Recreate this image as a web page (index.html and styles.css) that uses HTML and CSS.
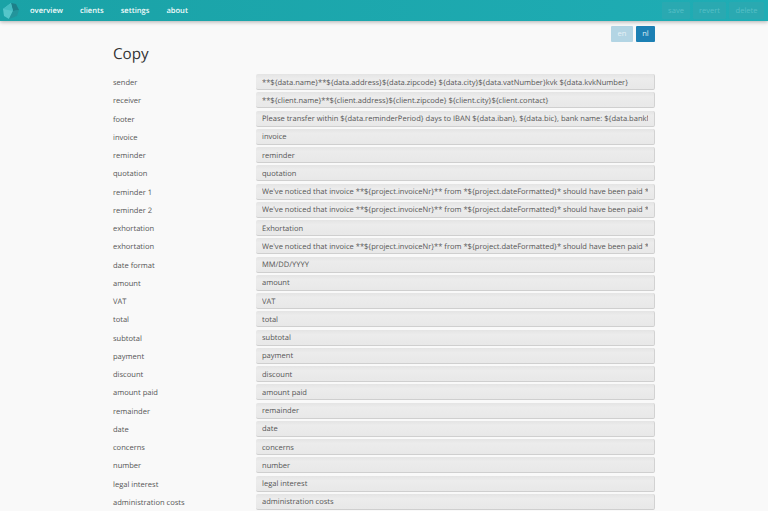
FILE: index.html
```html
<!DOCTYPE html>
<html lang="en">
<head>
<meta charset="utf-8">
<title>Copy</title>
<link rel="stylesheet" href="styles.css">
</head>
<body>
<header class="topbar">
  <svg class="logo" width="18" height="18" viewBox="0 0 18 18"><polygon points="1,7 9,1 11,9 7,17 2,14" fill="#55c6ca"/><polygon points="9,1 14,2 17,8 11,9" fill="#1d7f88"/><polygon points="17,8 15,14 7,17 11,9" fill="#23949b"/><polygon points="1,7 9,1 11,9" fill="#43bcc1"/></svg>
  <nav class="nav"><a>overview</a><a>clients</a><a>settings</a><a>about</a></nav>
  <div class="actions"><button class="save">save</button><button class="revert">revert</button><button class="delete">delete</button></div>
</header>
<main class="page">
  <div class="langs"><button class="lang">en</button><button class="lang on">nl</button></div>
  <h1>Copy</h1>
  <form class="rows">
    <label class="row"><span>sender</span><input value="**${data.name}**${data.address}${data.zipcode} ${data.city}${data.vatNumber}kvk ${data.kvkNumber}"></label>
    <label class="row"><span>receiver</span><input value="**${client.name}**${client.address}${client.zipcode} ${client.city}${client.contact}"></label>
    <label class="row"><span>footer</span><input value="Please transfer within ${data.reminderPeriod} days to IBAN ${data.iban}, ${data.bic}, bank name: ${data.bankName}"></label>
    <label class="row"><span>invoice</span><input value="invoice"></label>
    <label class="row"><span>reminder</span><input value="reminder"></label>
    <label class="row"><span>quotation</span><input value="quotation"></label>
    <label class="row"><span>reminder 1</span><input value="We've noticed that invoice **${project.invoiceNr}** from *${project.dateFormatted}* should have been paid *before*"></label>
    <label class="row"><span>reminder 2</span><input value="We've noticed that invoice **${project.invoiceNr}** from *${project.dateFormatted}* should have been paid *before*"></label>
    <label class="row"><span>exhortation</span><input value="Exhortation"></label>
    <label class="row"><span>exhortation</span><input value="We've noticed that invoice **${project.invoiceNr}** from *${project.dateFormatted}* should have been paid *before*"></label>
    <label class="row"><span>date format</span><input value="MM/DD/YYYY"></label>
    <label class="row"><span>amount</span><input value="amount"></label>
    <label class="row"><span>VAT</span><input value="VAT"></label>
    <label class="row"><span>total</span><input value="total"></label>
    <label class="row"><span>subtotal</span><input value="subtotal"></label>
    <label class="row"><span>payment</span><input value="payment"></label>
    <label class="row"><span>discount</span><input value="discount"></label>
    <label class="row"><span>amount paid</span><input value="amount paid"></label>
    <label class="row"><span>remainder</span><input value="remainder"></label>
    <label class="row"><span>date</span><input value="date"></label>
    <label class="row"><span>concerns</span><input value="concerns"></label>
    <label class="row"><span>number</span><input value="number"></label>
    <label class="row"><span>legal interest</span><input value="legal interest"></label>
    <label class="row"><span>administration costs</span><input value="administration costs"></label>
  </form>
</main>
</body>
</html>
```
FILE: styles.css
```css
html, body { margin: 0; height: 511px; overflow: hidden; background: #f9f9f9; }
body { font-family: "Open Sans", sans-serif; font-size: 7.55px; color: #555; text-rendering: geometricPrecision; }
.topbar { height: 21px; background: linear-gradient(to right, #1aa2a6, #1fadb5); box-shadow: 0 1px 4px rgba(0,0,0,.3); display: flex; align-items: center; padding-left: 2px; position: relative; }
.logo { display: block; }
.nav { display: flex; gap: 17px; margin-left: 10px; padding-top: 1px; color: #f2fbfb; font-weight: 600; font-size: 7.55px; }
.actions { margin-left: auto; display: flex; gap: 3px; padding-right: 4px; height: 17px; }
.actions button { border: 0; border-radius: 1px; background: #2aa9b1; color: #57bfc6; font: 7.55px "Open Sans", sans-serif; padding: 1px 0 0; height: 17px; text-rendering: geometricPrecision; }
.actions .save { width: 28px; }
.actions .revert { width: 33px; }
.actions .delete { width: 35px; }
.page { width: 542px; margin: 0 auto; }
.langs { display: flex; justify-content: flex-end; gap: 3px; padding-top: 5px; }
.lang { width: 22px; height: 16px; border: 0; border-radius: 1px; padding: 0; background: #b3d5e4; color: #e6f1f6; font: 7.55px "Open Sans", sans-serif; text-rendering: geometricPrecision; }
.lang.on { width: 19px; background: #1c80b4; color: #dfeef6; }
h1 { margin: 0 0 8px; font-size: 15.2px; font-weight: 400; color: #333; line-height: 24px; }
.rows { display: flex; flex-direction: column; }
.row { display: flex; align-items: center; height: 18.26px; }
.row span { width: 143px; flex: none; }
.row input { flex: none; width: 399px; height: 16px; margin: -1px 0 1px; box-sizing: border-box; border: 0; border-right: 1px solid #d2d2d2; border-bottom: 1px solid #cfcfcf; border-radius: 2px; padding: 2px 6px 0; background: linear-gradient(#e4e4e4, #ececec 30%, #e8e8e8); color: #555; font: 7.55px "Open Sans", sans-serif; outline: 0; text-rendering: geometricPrecision; }
```
